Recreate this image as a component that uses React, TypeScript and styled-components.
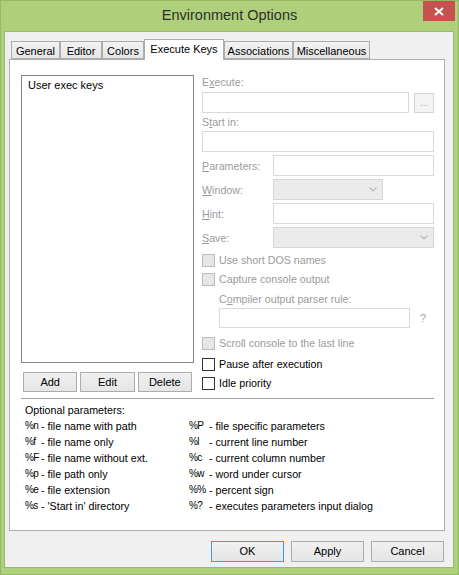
import { FC, ReactNode } from "react";
import styled, { createGlobalStyle } from "styled-components";

const GlobalStyle = createGlobalStyle`
  html, body {
    margin: 0;
    padding: 0;
    background: #afd07a;
  }
  * {
    box-sizing: border-box;
  }
`;

const FONT = `"Liberation Sans", Arial, sans-serif`;

type Param = { key: string; desc: string };

const leftParams: Param[] = [
  { key: "%n", desc: "- file name with path" },
  { key: "%f", desc: "- file name only" },
  { key: "%F", desc: "- file name without ext." },
  { key: "%p", desc: "- file path only" },
  { key: "%e", desc: "- file extension" },
  { key: "%s", desc: "- 'Start in' directory" },
];

const rightParams: Param[] = [
  { key: "%P", desc: "- file specific parameters" },
  { key: "%l", desc: "- current line number" },
  { key: "%c", desc: "- current column number" },
  { key: "%w", desc: "- word under cursor" },
  { key: "%%", desc: "- percent sign" },
  { key: "%?", desc: "- executes parameters input dialog" },
];

const tabs = [
  { name: "General", width: 49 },
  { name: "Editor", width: 42 },
  { name: "Colors", width: 42 },
  { name: "Execute Keys", width: 80, active: true },
  { name: "Associations", width: 69 },
  { name: "Miscellaneous", width: 77 },
];

const Chevron: FC = () => (
  <svg width="8" height="5" viewBox="0 0 8 5">
    <path d="M0.5 0.5 L4 4 L7.5 0.5" fill="none" stroke="#b8b8b8" strokeWidth="1.2" />
  </svg>
);

const Check: FC<{ disabled?: boolean; children: ReactNode; gap: number }> = ({
  disabled,
  children,
  gap,
}) => (
  <CheckRow $gap={gap} $disabled={disabled}>
    <CheckBox $disabled={disabled} />
    <span>{children}</span>
  </CheckRow>
);

export default function App() {
  return (
    <>
      <GlobalStyle />
      <Window>
        <TitleBar>
          <span />
          <Title>Environment Options</Title>
          <CloseButton>
            <svg width="10" height="9" viewBox="0 0 10 9">
              <path d="M1 1 L9 8 M9 1 L1 8" stroke="#fff" strokeWidth="2" />
            </svg>
          </CloseButton>
        </TitleBar>
        <Client>
          <TabRow>
            {tabs.map((t) => (
              <Tab key={t.name} $width={t.width} $active={t.active}>
                {t.name}
              </Tab>
            ))}
          </TabRow>
          <Panel>
            <TopSection>
              <LeftColumn>
                <ListBox>
                  <ListItem>User exec keys</ListItem>
                </ListBox>
                <ListButtons>
                  <PushButton>Add</PushButton>
                  <PushButton>Edit</PushButton>
                  <PushButton>Delete</PushButton>
                </ListButtons>
              </LeftColumn>
              <RightColumn>
                <Caption $top={0}>
                  E<U>x</U>ecute:
                </Caption>
                <InputRow $top={3}>
                  <TextInput $width={208} />
                  <BrowseButton>...</BrowseButton>
                </InputRow>
                <Caption $top={2}>
                  S<U>t</U>art in:
                </Caption>
                <InputRow $top={2}>
                  <TextInput $width={232} />
                </InputRow>
                <FieldRow $top={3}>
                  <FieldLabel>
                    <U>P</U>arameters:
                  </FieldLabel>
                  <TextInput $width={161} />
                </FieldRow>
                <FieldRow $top={3}>
                  <FieldLabel>
                    <U>W</U>indow:
                  </FieldLabel>
                  <Select $width={110}>
                    <Chevron />
                  </Select>
                </FieldRow>
                <FieldRow $top={3}>
                  <FieldLabel>
                    <U>H</U>int:
                  </FieldLabel>
                  <TextInput $width={161} />
                </FieldRow>
                <FieldRow $top={3}>
                  <FieldLabel>
                    <U>S</U>ave:
                  </FieldLabel>
                  <Select $width={161}>
                    <Chevron />
                  </Select>
                </FieldRow>
                <Check disabled gap={6}>
                  Use short DOS names
                </Check>
                <Check disabled gap={6}>
                  Capture console output
                </Check>
                <Indented>
                  <Caption $top={6}>
                    C<U>o</U>mpiler output parser rule:
                  </Caption>
                  <InputRow $top={2}>
                    <TextInput $width={191} $height={20} />
                    <Help>?</Help>
                  </InputRow>
                </Indented>
                <Check disabled gap={9}>
                  Scroll console to the last line
                </Check>
                <Check gap={8}>Pause after execution</Check>
                <Check gap={6}>Idle priority</Check>
              </RightColumn>
            </TopSection>
            <Separator />
            <ParamsSection>
              <ParamsHeading>Optional parameters:</ParamsHeading>
              <ParamsColumns>
                <ParamList $keyWidth={16}>
                  {leftParams.map((p) => (
                    <ParamLine key={p.key}>
                      <ParamKey>{p.key}</ParamKey>
                      <span>{p.desc}</span>
                    </ParamLine>
                  ))}
                </ParamList>
                <ParamList $keyWidth={20}>
                  {rightParams.map((p) => (
                    <ParamLine key={p.key}>
                      <ParamKey>{p.key}</ParamKey>
                      <span>{p.desc}</span>
                    </ParamLine>
                  ))}
                </ParamList>
              </ParamsColumns>
            </ParamsSection>
          </Panel>
          <DialogButtons>
            <DialogButton $default>OK</DialogButton>
            <DialogButton>Apply</DialogButton>
            <DialogButton>Cancel</DialogButton>
          </DialogButtons>
        </Client>
      </Window>
    </>
  );
}

const Window = styled.div`
  width: 459px;
  height: 575px;
  background: #afd07a;
  border: 1px solid #95b863;
  display: flex;
  flex-direction: column;
  font-family: ${FONT};
  font-size: 10.7px;
  color: #000;
`;

const TitleBar = styled.div`
  height: 30px;
  display: grid;
  grid-template-columns: 1fr auto 1fr;
  align-items: start;
`;

const Title = styled.div`
  font-size: 14.5px;
  line-height: 29px;
  color: #2e2e2e;
`;

const CloseButton = styled.div`
  justify-self: end;
  margin-right: 3px;
  width: 32px;
  height: 20px;
  background: #c75050;
  display: flex;
  align-items: center;
  justify-content: center;
`;

const Client = styled.div`
  flex: 1;
  margin: 0 4px 6px 3px;
  background: #f0f0f0;
  border: 1px solid #9db680;
  display: flex;
  flex-direction: column;
  padding: 7px 8px 0 4px;
`;

const TabRow = styled.div`
  height: 20px;
  display: flex;
  align-items: flex-end;
  padding-left: 2px;
`;

const Tab = styled.div<{ $width: number; $active?: boolean }>`
  width: ${({ $width }) => $width}px;
  height: ${({ $active }) => ($active ? 21 : 18)}px;
  margin-bottom: ${({ $active }) => ($active ? -1 : 0)}px;
  position: relative;
  z-index: ${({ $active }) => ($active ? 1 : 0)};
  border: 1px solid #acacac;
  border-bottom: ${({ $active }) => ($active ? "none" : "1px solid #acacac")};
  background: ${({ $active }) =>
    $active ? "#fff" : "linear-gradient(#f2f2f2, #e6e6e6)"};
  font-size: 11px;
  text-align: center;
  line-height: 18px;
  white-space: nowrap;
`;

const Panel = styled.div`
  width: 436px;
  height: 472px;
  background: #fff;
  border: 1px solid #adadad;
  padding: 15px 10px 0 11px;
  display: flex;
  flex-direction: column;
`;

const TopSection = styled.div`
  display: grid;
  grid-template-columns: 173px 232px;
  column-gap: 8px;
`;

const LeftColumn = styled.div`
  display: flex;
  flex-direction: column;
`;

const ListBox = styled.div`
  height: 288px;
  border: 1px solid #828790;
  padding: 3px 6px;
`;

const ListItem = styled.div`
  font-size: 11px;
  line-height: 13px;
`;

const ListButtons = styled.div`
  margin-top: 9px;
  display: flex;
  gap: 3px;
  padding: 0 2px;
`;

const PushButton = styled.div`
  flex: 1;
  height: 20px;
  border: 1px solid #acacac;
  background: linear-gradient(#f0f0f0, #e5e5e5);
  text-align: center;
  line-height: 18px;
  font-size: 11px;
`;

const RightColumn = styled.div`
  display: flex;
  flex-direction: column;
  color: #9b9b9b;
`;

const U = styled.span`
  text-decoration: underline;
`;

const Caption = styled.div<{ $top: number }>`
  margin-top: ${({ $top }) => $top}px;
  line-height: 14px;
  height: 14px;
`;

const InputRow = styled.div<{ $top: number }>`
  margin-top: ${({ $top }) => $top}px;
  display: flex;
  align-items: center;
  gap: 5px;
`;

const TextInput = styled.div<{ $width: number; $height?: number }>`
  width: ${({ $width }) => $width}px;
  height: ${({ $height }) => $height ?? 21}px;
  background: #fff;
  border: 1px solid #d9d9d9;
`;

const BrowseButton = styled.div`
  width: 20px;
  height: 20px;
  border: 1px solid #d5d5d5;
  background: #f4f4f4;
  color: #a8a8a8;
  text-align: center;
  line-height: 17px;
  font-size: 10px;
`;

const FieldRow = styled.div<{ $top: number }>`
  margin-top: ${({ $top }) => $top}px;
  display: grid;
  grid-template-columns: 71px auto;
  align-items: center;
  justify-content: start;
`;

const FieldLabel = styled.div`
  line-height: 14px;
`;

const Select = styled.div<{ $width: number }>`
  width: ${({ $width }) => $width}px;
  height: 21px;
  background: #ebebeb;
  border: 1px solid #d6d6d6;
  display: flex;
  align-items: center;
  justify-content: flex-end;
  padding-right: 5px;
`;

const CheckRow = styled.div<{ $gap: number; $disabled?: boolean }>`
  margin-top: ${({ $gap }) => $gap}px;
  display: flex;
  align-items: center;
  gap: 4px;
  height: 13px;
  line-height: 13px;
  color: ${({ $disabled }) => ($disabled ? "#9b9b9b" : "#000")};
`;

const CheckBox = styled.div<{ $disabled?: boolean }>`
  width: 13px;
  height: 13px;
  border: 1px solid ${({ $disabled }) => ($disabled ? "#bcbcbc" : "#333")};
  background: ${({ $disabled }) => ($disabled ? "#e6e6e6" : "#fff")};
`;

const Indented = styled.div`
  padding-left: 17px;
`;

const Help = styled.div`
  margin-left: 5px;
  color: #a5a5a5;
  font-size: 11px;
`;

const Separator = styled.div`
  margin-top: 6px;
  width: 413px;
  height: 1px;
  background: #a0a0a0;
`;

const ParamsSection = styled.div`
  margin-top: 3px;
  padding-left: 4px;
`;

const ParamsHeading = styled.div`
  line-height: 16px;
`;

const ParamsColumns = styled.div`
  display: grid;
  grid-template-columns: 164px auto;
`;

const ParamList = styled.div<{ $keyWidth: number }>`
  display: grid;
  grid-template-columns: ${({ $keyWidth }) => $keyWidth}px auto;
  line-height: 16px;
  white-space: nowrap;
`;

const ParamLine = styled.div`
  display: contents;
`;

const ParamKey = styled.span`
  letter-spacing: -0.6px;
  font-size: 10px;
`;

const DialogButtons = styled.div`
  margin-top: 10px;
  display: flex;
  justify-content: flex-end;
  gap: 7px;
  padding-right: 1px;
`;

const DialogButton = styled.div<{ $default?: boolean }>`
  width: 73px;
  height: 21px;
  border: 1px solid ${({ $default }) => ($default ? "#3c9bf0" : "#acacac")};
  background: linear-gradient(#f0f0f0, #e5e5e5);
  text-align: center;
  line-height: 19px;
  font-size: 11px;
`;
